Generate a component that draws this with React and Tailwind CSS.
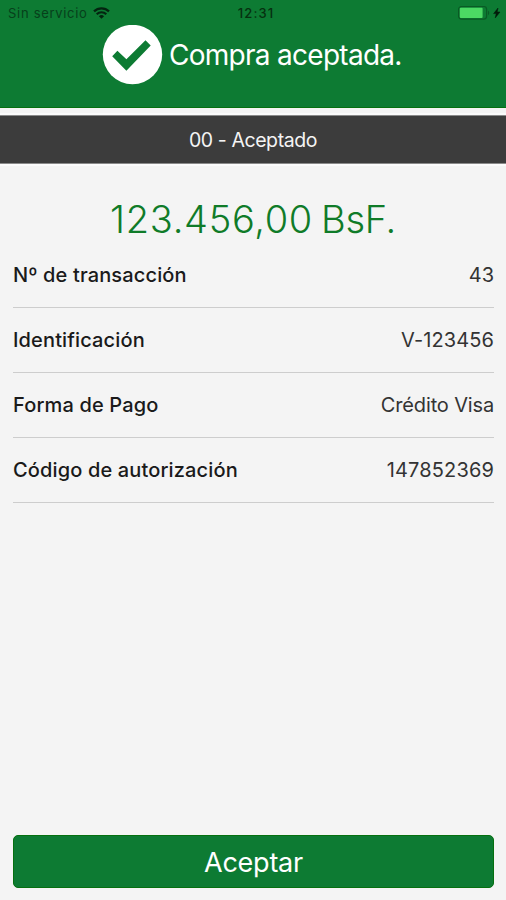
import React from 'react';

const details = [
  { label: 'Nº de transacción', value: '43', valueClass: 'tracking-[0px]' },
  { label: 'Identificación', value: 'V-123456', valueClass: 'tracking-[0.1px]' },
  { label: 'Forma de Pago', value: 'Crédito Visa', valueClass: 'tracking-[-0.15px]' },
  { label: 'Código de autorización', value: '147852369', valueClass: 'tracking-[0.15px]' },
];

function WifiIcon() {
  return (
    <svg width="17" height="12" viewBox="0 0 17 12" fill="none" stroke="#042410" strokeWidth="2.2">
      <path d="M1 4.4a10.8 10.8 0 0 1 15 0" />
      <path d="M3.7 7.2a6.9 6.9 0 0 1 9.6 0" />
      <path d="M8.5 11.8L5.9 9.2a3.7 3.7 0 0 1 5.2 0z" fill="#042410" stroke="none" />
    </svg>
  );
}

function BatteryIcon() {
  return (
    <svg width="43" height="16" viewBox="0 0 43 16">
      <rect x=".6" y="1.5" width="28" height="12.6" rx="2.8" fill="none" stroke="#0a5a25" strokeWidth="1.2" />
      <rect x="1.8" y="2.7" width="22.8" height="10.2" rx="1" fill="#4cd964" />
      <path d="M30 5.4c1.6.8 1.6 4 0 4.8z" fill="#0a5a25" />
      <path d="M40 3L35.6 8.6h2.6l-1 4.4 4.8-6h-2.8z" fill="#031a0a" stroke="#031a0a" strokeWidth=".5" />
    </svg>
  );
}

function StatusBar() {
  return (
    <div className="grid h-[25px] grid-cols-3 items-center pl-2 pr-[5px] text-[13px] leading-[26px] text-[#07401b]">
      <div className="flex items-center gap-[5px]">
        <span className="whitespace-nowrap tracking-[0.7px]">Sin servicio</span>
        <WifiIcon />
      </div>
      <span className="pl-[3px] text-center font-medium tracking-[1.1px] text-[#06300f]">12:31</span>
      <div className="flex justify-end">
        <BatteryIcon />
      </div>
    </div>
  );
}

export default function App() {
  return (
    <div className="flex h-[900px] w-[506px] flex-col overflow-hidden bg-[#f4f4f4] font-['Inter',sans-serif]">
      {/* Header */}
      <header className="h-[108px] shrink-0 border-b border-[#05700f] bg-[#0d7b33]">
        <StatusBar />
        <div className="flex items-center pl-[102px]">
          <svg width="61" height="60" viewBox="0 0 61 60">
            <circle cx="30.5" cy="29.5" r="29.7" fill="#fff" />
            <path d="M10.2 31.2l5.2-5.4 9 8.4L43.5 15.2l5.2 5.3L24.4 45.7z" fill="#0d7b33" />
          </svg>
          <h1 className="ml-[6px] text-[28px] leading-[60px] tracking-[-0.72px] text-white">Compra aceptada.</h1>
        </div>
      </header>

      {/* Response code */}
      <div className="mt-[7px] flex h-[49px] shrink-0 items-center justify-center border-y border-[#8a8a8a] bg-[#3c3c3c] shadow-[0_0_0_2px_#fbfbfb]">
        <span className="pt-0.5 text-[19.5px] tracking-[-0.42px] text-[#f4f4f4]">00 - Aceptado</span>
      </div>

      {/* Amount */}
      <p className="mt-[31px] text-center text-[38px] font-light leading-[48px] text-[#0f7b28]">
        <span className="tracking-[0.7px]">123.456,00</span>
        <span className="ml-[8px] tracking-[-0.3px]">BsF.</span>
      </p>

      {/* Details */}
      <dl className="mx-3 pl-px">
        {details.map(({ label, value, valueClass }) => (
          <div
            key={label}
            className="flex h-[65px] items-center justify-between border-b border-[#cdcdcd] text-[20px] text-[#1a1a1a]"
          >
            <dt className="font-medium tracking-[0.14px]">{label}</dt>
            <dd className={`text-[#333] ${valueClass}`}>{value}</dd>
          </div>
        ))}
      </dl>

      <button className="ml-[13px] mr-3 mb-3 mt-auto h-[53px] shrink-0 rounded-[5px] border border-[#05700f] bg-[#0d7b33] pt-[3px] text-[27px] tracking-[-0.25px] text-white">
        Aceptar
      </button>
    </div>
  );
}
